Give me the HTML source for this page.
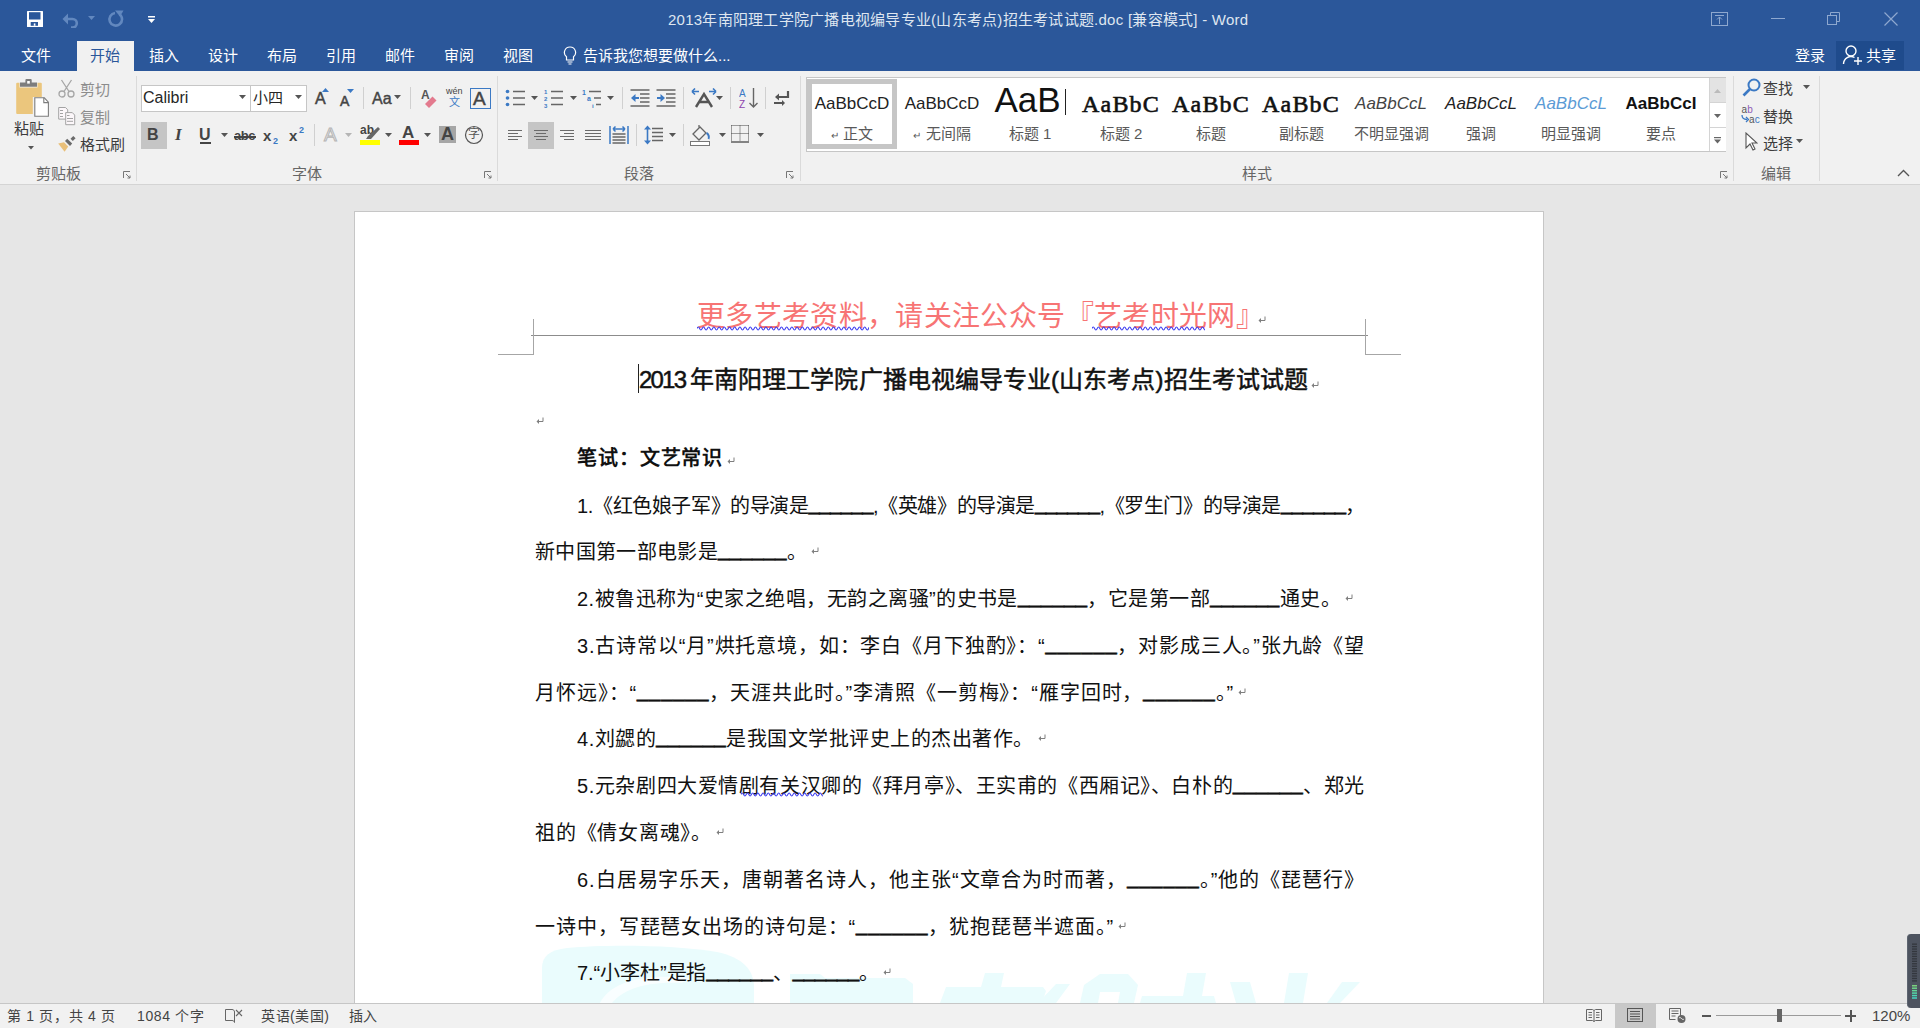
<!DOCTYPE html>
<html lang="zh-CN"><head><meta charset="utf-8">
<style>
*{box-sizing:border-box;margin:0;padding:0}
html,body{width:1920px;height:1028px;overflow:hidden;background:#e6e6e6;font-family:"Liberation Sans",sans-serif}
.a{position:absolute;white-space:nowrap}
#top{position:absolute;left:0;top:0;width:1920px;height:71px;background:#2b579a}
#ribbon{position:absolute;left:0;top:71px;width:1920px;height:114px;background:#f1f1f1;border-bottom:1px solid #d4d4d4}
#canvas{position:absolute;left:0;top:185px;width:1920px;height:818px;background:#e6e6e6}
#page{position:absolute;left:354px;top:211px;width:1190px;height:900px;background:#fff;border:1px solid #c6c6c6}
#status{position:absolute;left:0;top:1003px;width:1920px;height:25px;background:#f1f1f1;border-top:1px solid #c6c6c6}
.tab{position:absolute;top:46px;font-size:15px;color:#fff;line-height:20px}
.rt{font-size:14px;color:#3c3c3c;line-height:18px}
.gl{font-size:14px;color:#666;line-height:18px}
.sep{position:absolute;top:76px;width:1px;height:105px;background:#dadada}
.ln{font-size:20px;color:#111;line-height:26px}
.u{position:relative;top:-3px;-webkit-text-stroke:0.7px #111}
</style></head><body>
<div id="top"></div>
<div id="ribbon"></div>
<div id="canvas"></div>
<div id="page"></div>
<div id="status"></div>

<!-- TITLE BAR -->
<svg class="a" style="left:26px;top:10px" width="18" height="18" viewBox="0 0 18 18"><rect x="1" y="1" width="16" height="16" rx="0.5" fill="#fff"/><rect x="3" y="2.2" width="11.5" height="7.3" fill="#2b579a"/><rect x="4.7" y="12" width="7.3" height="3.8" fill="#2b579a"/><rect x="7.8" y="13.4" width="1.6" height="2.4" fill="#fff"/></svg>
<svg class="a" style="left:62px;top:11px" width="20" height="17" viewBox="0 0 20 17"><path d="M4 8h6.5a4.3 4.3 0 0 1 0 8.6H9" fill="none" stroke="#6288bf" stroke-width="2.6"/><path d="M0.5 8L6 2.5V13.5z" fill="#6288bf"/></svg>
<svg class="a" style="left:88px;top:16px" width="8" height="5"><path d="M0 0h7l-3.5 4z" fill="#6288bf"/></svg>
<svg class="a" style="left:107px;top:10px" width="18" height="18" viewBox="0 0 18 18"><path d="M12.5 4.2A6.3 6.3 0 1 1 8 3" fill="none" stroke="#6288bf" stroke-width="2.6"/><path d="M8 0.5h8.5l-3.5 6z" fill="#6288bf"/></svg>
<svg class="a" style="left:148px;top:16px" width="8" height="8"><rect x="0" y="0" width="7" height="1.5" fill="#fff"/><path d="M0 3h7l-3.5 4z" fill="#fff"/></svg>
<div class="a" style="left:668px;top:10px;font-size:15px;color:#dfe6f0;line-height:20px;letter-spacing:0.25px">2013年南阳理工学院广播电视编导专业(山东考点)招生考试试题.doc [兼容模式] - Word</div>
<svg class="a" style="left:1711px;top:12px" width="18" height="15"><rect x="0.5" y="0.5" width="16" height="13" fill="none" stroke="#8ea8cf"/><path d="M4 3.5h9M8.5 5v7M6 7.5l2.5-2.5 2.5 2.5" fill="none" stroke="#8ea8cf"/></svg>
<div class="a" style="left:1771px;top:18px;width:14px;height:1px;background:#8ea8cf"></div>
<svg class="a" style="left:1827px;top:12px" width="14" height="14"><rect x="0.5" y="3.5" width="9" height="9" fill="none" stroke="#8ea8cf"/><path d="M3.5 3.5v-3h9v9h-3" fill="none" stroke="#8ea8cf"/></svg>
<svg class="a" style="left:1884px;top:12px" width="14" height="14"><path d="M0.5 0.5l13 13M13.5 0.5l-13 13" stroke="#8ea8cf" stroke-width="1.2"/></svg>

<!-- TABS -->
<div class="a" style="left:77px;top:41px;width:57px;height:30px;background:#f1f1f1"></div>
<div class="tab a" style="left:21px">文件</div>
<div class="tab a" style="left:90px;color:#2b579a">开始</div>
<div class="tab a" style="left:149px">插入</div>
<div class="tab a" style="left:208px">设计</div>
<div class="tab a" style="left:267px">布局</div>
<div class="tab a" style="left:326px">引用</div>
<div class="tab a" style="left:385px">邮件</div>
<div class="tab a" style="left:444px">审阅</div>
<div class="tab a" style="left:503px">视图</div>
<svg class="a" style="left:563px;top:46px" width="14" height="20" viewBox="0 0 14 20"><path d="M7 1a5.5 5.5 0 0 0-3.5 9.8V14h7v-3.2A5.5 5.5 0 0 0 7 1z" fill="none" stroke="#fff" stroke-width="1.2"/><path d="M4.5 16h5M5.5 18h3" stroke="#fff" stroke-width="1.2"/></svg>
<div class="tab a" style="left:583px;color:#fff">告诉我您想要做什么...</div>
<div class="tab a" style="left:1795px">登录</div>
<div class="a" style="left:1836px;top:41px;width:68px;height:29px;background:#1f4b8c"></div>
<svg class="a" style="left:1842px;top:44px" width="22" height="22" viewBox="0 0 22 22"><circle cx="9" cy="7" r="5" fill="none" stroke="#fff" stroke-width="1.4"/><path d="M1.5 20a7.5 7.5 0 0 1 11-6.5" fill="none" stroke="#fff" stroke-width="1.4"/><path d="M16 13v8M12 17h8" stroke="#fff" stroke-width="1.4"/></svg>
<div class="tab a" style="left:1866px">共享</div>


<!-- RIBBON: CLIPBOARD -->
<svg class="a" style="left:13px;top:77px" width="38" height="42" viewBox="13 77 38 42"><path d="M16.2 82.8h3.3v4.6h18v-4.6h3.3a1 1 0 0 1 1 1v13.2h-9v17h-15.6a1 1 0 0 1-1-1v-29.2a1 1 0 0 1 1-1z" fill="#ebc67d"/><path d="M20 82.5h5.4v-2.6a1 1 0 0 1 1-1h4.3a1 1 0 0 1 1 1v2.6h5.3v4.3h-17z" fill="#7d7d7d"/><rect x="27.2" y="81" width="2.6" height="2.6" fill="#fff"/><path d="M34.8 97.8h9.5l4.1 4.4v14h-13.6z" fill="#fff" stroke="#7d7d7d" stroke-width="1.1"/><path d="M43.8 97.8v4.8h4.6" fill="none" stroke="#7d7d7d" stroke-width="1.1"/></svg>
<div class="a rt" style="left:14px;top:120px;font-size:15px">粘贴</div>
<svg class="a" style="left:28px;top:146px" width="7" height="4"><path d="M0 0h6l-3 3.5z" fill="#555"/></svg>
<svg class="a" style="left:58px;top:79px" width="17" height="19" viewBox="0 0 17 19"><path d="M3.5 1l7.5 11.5M13.5 1l-7.5 11.5" stroke="#a6a6a6" stroke-width="1.3"/><circle cx="4" cy="15" r="3" fill="none" stroke="#a6a6a6" stroke-width="1.3"/><circle cx="13" cy="15" r="3" fill="none" stroke="#a6a6a6" stroke-width="1.3"/></svg>
<div class="a rt" style="left:80px;top:81px;color:#8c8c8c;font-size:15px">剪切</div>
<svg class="a" style="left:57px;top:106px" width="20" height="20" viewBox="57 106 20 20"><path d="M58.7 107.5h6.8l2.2 2.3v9.3h-9z" fill="#fcf7fa" stroke="#a3a3a3" stroke-width="1"/><path d="M65.7 112.6h6.6l2.4 2.5v9.6h-9z" fill="#fcf7fa" stroke="#a3a3a3" stroke-width="1"/><path d="M60 110.5h3M60 113.5h3M60 116.5h3M67 115.5h2.5M67 118.5h6M67 121.3h6" stroke="#a3a3a3" stroke-width="1"/></svg>
<div class="a rt" style="left:80px;top:109px;color:#8c8c8c;font-size:15px">复制</div>
<svg class="a" style="left:57px;top:135px" width="20" height="18" viewBox="57 135 20 18"><path d="M58.2 143.5l5.8-1.2 4.2 4.3-3.6 5.2z" fill="#e9c07a"/><path d="M65 141l2.2-2.2 5 4.8-2.2 2.3z" fill="#6b6b6b"/><path d="M70.5 138.8l2.8-2.8 2.3 2.2-2.8 2.9z" fill="#6b6b6b"/></svg>
<div class="a rt" style="left:80px;top:136px;font-size:15px">格式刷</div>
<div class="a gl" style="left:36px;top:165px;font-size:15px">剪贴板</div>
<svg class="a" style="left:123px;top:171px" width="8" height="8"><path d="M0.5 7V0.5H7M3 3l4 4M4.5 7H7V4.5" fill="none" stroke="#777"/></svg>
<div class="sep" style="left:136px"></div>

<!-- FONT -->
<div class="a" style="left:141px;top:85px;width:166px;height:27px;background:#fff;border:1px solid #c6c6c6"></div>
<div class="a" style="left:250px;top:86px;width:1px;height:25px;background:#c6c6c6"></div>
<div class="a" style="left:143px;top:88px;font-size:16px;color:#262626;line-height:20px">Calibri</div>
<svg class="a" style="left:239px;top:95px" width="8" height="5"><path d="M0 0h7l-3.5 4z" fill="#555"/></svg>
<div class="a" style="left:253px;top:88px;font-size:15px;color:#262626;line-height:20px">小四</div>
<svg class="a" style="left:295px;top:95px" width="8" height="5"><path d="M0 0h7l-3.5 4z" fill="#555"/></svg>
<div class="a" style="left:315px;top:90px;font-size:16px;color:#444;line-height:18px;-webkit-text-stroke:0.5px #444">A</div>
<svg class="a" style="left:322px;top:88px" width="8" height="5"><path d="M0 4h7l-3.5-4z" fill="#3b79c4"/></svg>
<div class="a" style="left:340px;top:93px;font-size:14px;color:#444;line-height:16px;-webkit-text-stroke:0.5px #444">A</div>
<svg class="a" style="left:347px;top:89px" width="8" height="5"><path d="M0 0h7l-3.5 4z" fill="#3b79c4"/></svg>
<div class="a" style="left:363px;top:87px;width:1px;height:22px;background:#d0d0d0"></div>
<div class="a" style="left:372px;top:90px;font-size:16px;color:#444;line-height:18px;-webkit-text-stroke:0.4px #444">Aa</div>
<svg class="a" style="left:394px;top:95px" width="8" height="5"><path d="M0 0h7l-3.5 4z" fill="#555"/></svg>
<div class="a" style="left:410px;top:87px;width:1px;height:22px;background:#d0d0d0"></div>
<div class="a" style="left:421px;top:88px;font-size:12px;color:#555;line-height:14px;font-weight:bold">A</div>
<svg class="a" style="left:424px;top:94px" width="14" height="14" viewBox="0 0 14 14"><path d="M1 10l7.5-7.5 4 4L5 14z" fill="#e37a8e"/></svg>
<div class="a" style="left:446px;top:86px;font-size:9px;color:#444;line-height:11px">wén</div>
<div class="a" style="left:449px;top:96px;font-size:11px;color:#3b79c4;line-height:12px">文</div>
<div class="a" style="left:470px;top:88px;width:21px;height:21px;border:1.5px solid #3b79c4"></div>
<div class="a" style="left:473px;top:89px;font-size:19px;color:#444;line-height:19px;-webkit-text-stroke:0.5px #444">A</div>

<div class="a" style="left:141px;top:122px;width:26px;height:27px;background:#c5c5c5"></div>
<div class="a" style="left:147px;top:126px;font-size:16px;color:#444;line-height:18px;font-weight:bold">B</div>
<div class="a" style="left:175px;top:126px;font-size:17px;color:#444;line-height:18px;font-weight:bold;font-style:italic;font-family:'Liberation Serif',serif">I</div>
<div class="a" style="left:199px;top:126px;font-size:16px;color:#444;line-height:18px;font-weight:bold">U</div>
<div class="a" style="left:200px;top:142px;width:11px;height:1.5px;background:#444"></div>
<svg class="a" style="left:221px;top:133px" width="8" height="5"><path d="M0 0h7l-3.5 4z" fill="#555"/></svg>
<div class="a" style="left:234px;top:129px;font-size:13px;color:#444;line-height:14px;font-weight:bold;letter-spacing:-0.5px">abc</div>
<div class="a" style="left:234px;top:136px;width:22px;height:1.5px;background:#444"></div>
<div class="a" style="left:263px;top:128px;font-size:15px;color:#444;line-height:16px;font-weight:bold">x</div>
<div class="a" style="left:273px;top:136px;font-size:9px;color:#3b79c4;line-height:10px;font-weight:bold">2</div>
<div class="a" style="left:289px;top:128px;font-size:15px;color:#444;line-height:16px;font-weight:bold">x</div>
<div class="a" style="left:299px;top:125px;font-size:9px;color:#3b79c4;line-height:10px;font-weight:bold">2</div>
<div class="a" style="left:314px;top:124px;width:1px;height:22px;background:#d0d0d0"></div>
<div class="a" style="left:324px;top:125px;font-size:19px;color:#f1f1f1;line-height:19px;-webkit-text-stroke:1px #b5b5b5">A</div>
<svg class="a" style="left:345px;top:133px" width="8" height="5"><path d="M0 0h7l-3.5 4z" fill="#b5b5b5"/></svg>
<div class="a" style="left:360px;top:123px;font-size:12px;color:#444;line-height:14px;font-weight:bold">ab</div>
<svg class="a" style="left:365px;top:126px" width="16" height="14"><path d="M1 13l2-3 10-9 2 2-9 10z" fill="#666"/></svg>
<div class="a" style="left:360px;top:140px;width:20px;height:5px;background:#ffff00"></div>
<svg class="a" style="left:385px;top:133px" width="8" height="5"><path d="M0 0h7l-3.5 4z" fill="#555"/></svg>
<div class="a" style="left:402px;top:124px;font-size:17px;color:#444;line-height:17px;font-weight:bold">A</div>
<div class="a" style="left:399px;top:140px;width:20px;height:5px;background:#ff0000"></div>
<svg class="a" style="left:424px;top:133px" width="8" height="5"><path d="M0 0h7l-3.5 4z" fill="#555"/></svg>
<div class="a" style="left:439px;top:126px;width:17px;height:17px;background:#a6a6a6"></div>
<div class="a" style="left:441px;top:125px;font-size:18px;color:#444;line-height:18px;font-weight:bold">A</div>
<svg class="a" style="left:464px;top:125px" width="20" height="20"><circle cx="10" cy="10" r="8.5" fill="none" stroke="#555" stroke-width="1.2"/></svg>
<div class="a" style="left:468px;top:127px;font-size:12px;color:#555;line-height:14px">字</div>
<div class="a gl" style="left:292px;top:165px;font-size:15px">字体</div>
<svg class="a" style="left:484px;top:171px" width="8" height="8"><path d="M0.5 7V0.5H7M3 3l4 4M4.5 7H7V4.5" fill="none" stroke="#777"/></svg>
<div class="sep" style="left:497px"></div>


<!-- PARAGRAPH -->
<svg class="a" style="left:505px;top:89px" width="22" height="18" viewBox="0 0 22 18"><circle cx="2.5" cy="2.5" r="1.8" fill="#3b79c4"/><circle cx="2.5" cy="9" r="1.8" fill="#3b79c4"/><circle cx="2.5" cy="15.5" r="1.8" fill="#3b79c4"/><path d="M8 2.5h12M8 9h12M8 15.5h12" stroke="#666" stroke-width="1.5"/></svg><svg class="a" style="left:531px;top:96px" width="8" height="5"><path d="M0 0h7l-3.5 4z" fill="#555"/></svg><svg class="a" style="left:544px;top:88px" width="22" height="20" viewBox="0 0 22 20"><text x="0" y="6" font-size="6" fill="#3b79c4" font-family="Liberation Sans" font-weight="bold">1</text><text x="0" y="13" font-size="6" fill="#3b79c4" font-family="Liberation Sans" font-weight="bold">2</text><text x="0" y="20" font-size="6" fill="#3b79c4" font-family="Liberation Sans" font-weight="bold">3</text><path d="M7 3.5h12M7 10h12M7 16.5h12" stroke="#666" stroke-width="1.5"/></svg><svg class="a" style="left:570px;top:96px" width="8" height="5"><path d="M0 0h7l-3.5 4z" fill="#555"/></svg><svg class="a" style="left:582px;top:88px" width="24" height="20" viewBox="0 0 24 20"><text x="0" y="7" font-size="7" fill="#3b79c4" font-family="Liberation Sans" font-weight="bold">1</text><text x="5" y="13" font-size="7" fill="#3b79c4" font-family="Liberation Sans" font-weight="bold">a</text><text x="10" y="20" font-size="6" fill="#3b79c4" font-family="Liberation Sans" font-weight="bold">i</text><path d="M7 3.5h12M12 10h7M14 16.5h5" stroke="#666" stroke-width="1.5"/></svg><svg class="a" style="left:607px;top:96px" width="8" height="5"><path d="M0 0h7l-3.5 4z" fill="#555"/></svg><div class="a" style="left:622px;top:87px;width:1px;height:22px;background:#d0d0d0"></div><svg class="a" style="left:630px;top:89px" width="20" height="18" viewBox="0 0 20 18"><path d="M0.5 1h19M10 5h9.5M10 9h9.5M10 13h9.5M0.5 17h19" stroke="#666" stroke-width="1.4"/><path d="M1 9l4.5-4v8z" fill="#3b79c4"/><path d="M5 9h4" stroke="#3b79c4" stroke-width="2"/></svg><svg class="a" style="left:656px;top:89px" width="20" height="18" viewBox="0 0 20 18"><path d="M0.5 1h19M10 5h9.5M10 9h9.5M10 13h9.5M0.5 17h19" stroke="#666" stroke-width="1.4"/><path d="M9 9l-4.5-4v8z" fill="#3b79c4"/><path d="M1 9h4" stroke="#3b79c4" stroke-width="2"/></svg><div class="a" style="left:683px;top:87px;width:1px;height:22px;background:#d0d0d0"></div><svg class="a" style="left:691px;top:88px" width="26" height="20" viewBox="0 0 26 20"><path d="M1 3.5h7M18 3.5h7" stroke="#3b79c4" stroke-width="1.6"/><path d="M1 3.5l3-3M1 3.5l3 3M25 3.5l-3-3M25 3.5l-3 3" stroke="#3b79c4" stroke-width="1.6" fill="none"/><path d="M5 19l8-13 8 13M8.5 14h9" stroke="#555" stroke-width="2.4" fill="none"/></svg><svg class="a" style="left:716px;top:96px" width="8" height="5"><path d="M0 0h7l-3.5 4z" fill="#555"/></svg><div class="a" style="left:730px;top:87px;width:1px;height:22px;background:#d0d0d0"></div><svg class="a" style="left:739px;top:87px" width="20" height="22" viewBox="0 0 20 22"><text x="0" y="10" font-size="10" fill="#3b79c4" font-family="Liberation Sans">A</text><text x="0" y="21" font-size="10" fill="#8e44ad" font-family="Liberation Sans">Z</text><path d="M14.5 1v19M10.5 16l4 4 4-4" stroke="#666" stroke-width="1.4" fill="none"/></svg><div class="a" style="left:765px;top:87px;width:1px;height:22px;background:#d0d0d0"></div><svg class="a" style="left:773px;top:90px" width="18" height="16" viewBox="0 0 18 16"><path d="M15 1v6h-9" stroke="#555" stroke-width="2.2" fill="none"/><path d="M6 3.5v7l-4-3.5z" fill="#555"/><path d="M1 13h8" stroke="#555" stroke-width="2"/><path d="M9 10l3 3-3 3z" fill="#555"/></svg><div class="a" style="left:508px;top:130px;width:14px;height:1.2px;background:#6a6a6a"></div><div class="a" style="left:508px;top:133px;width:10px;height:1.2px;background:#6a6a6a"></div><div class="a" style="left:508px;top:136px;width:14px;height:1.2px;background:#6a6a6a"></div><div class="a" style="left:508px;top:139px;width:10px;height:1.2px;background:#6a6a6a"></div><div class="a" style="left:528px;top:122px;width:26px;height:27px;background:#c5c5c5"></div><div class="a" style="left:534px;top:130px;width:14px;height:1.2px;background:#6a6a6a"></div><div class="a" style="left:536px;top:133px;width:10px;height:1.2px;background:#6a6a6a"></div><div class="a" style="left:534px;top:136px;width:14px;height:1.2px;background:#6a6a6a"></div><div class="a" style="left:536px;top:139px;width:10px;height:1.2px;background:#6a6a6a"></div><div class="a" style="left:560px;top:130px;width:14px;height:1.2px;background:#6a6a6a"></div><div class="a" style="left:564px;top:133px;width:10px;height:1.2px;background:#6a6a6a"></div><div class="a" style="left:560px;top:136px;width:14px;height:1.2px;background:#6a6a6a"></div><div class="a" style="left:564px;top:139px;width:10px;height:1.2px;background:#6a6a6a"></div><div class="a" style="left:585px;top:130px;width:16px;height:1.2px;background:#6a6a6a"></div><div class="a" style="left:585px;top:133px;width:16px;height:1.2px;background:#6a6a6a"></div><div class="a" style="left:585px;top:136px;width:16px;height:1.2px;background:#6a6a6a"></div><div class="a" style="left:585px;top:139px;width:16px;height:1.2px;background:#6a6a6a"></div><svg class="a" style="left:609px;top:125px" width="20" height="20" viewBox="0 0 20 20"><path d="M1 1v18M19 1v18" stroke="#3b79c4" stroke-width="1.5"/><path d="M4 4h12M4 4l2.5-2.5M4 4l2.5 2.5M16 4l-2.5-2.5M16 4l-2.5 2.5" stroke="#3b79c4" stroke-width="1.5" fill="none"/><path d="M3.5 9h13M3.5 12h13M3.5 15h13M3.5 18h13" stroke="#666" stroke-width="1.5"/></svg><div class="a" style="left:636px;top:124px;width:1px;height:22px;background:#d0d0d0"></div><svg class="a" style="left:644px;top:125px" width="20" height="20" viewBox="0 0 20 20"><path d="M3.5 2v16" stroke="#3b79c4" stroke-width="1.6"/><path d="M0 4.5l3.5-4 3.5 4zM0 15.5l3.5 4 3.5-4z" fill="#3b79c4"/><path d="M8 3.5h11M8 7.5h11M8 11.5h11M8 15.5h11" stroke="#666" stroke-width="1.5"/></svg><svg class="a" style="left:669px;top:133px" width="8" height="5"><path d="M0 0h7l-3.5 4z" fill="#555"/></svg><div class="a" style="left:683px;top:124px;width:1px;height:22px;background:#d0d0d0"></div><svg class="a" style="left:690px;top:124px" width="24" height="22" viewBox="0 0 24 22"><path d="M3 10l7-7 6 6-7 7z" fill="none" stroke="#666" stroke-width="1.3"/><path d="M9 3.5v-2.5" stroke="#666" stroke-width="1.3"/><path d="M16.5 9c2 1 3 4 2 6" stroke="#3b79c4" stroke-width="2" fill="none"/><rect x="0.5" y="17.5" width="19" height="4" fill="#fff" stroke="#777"/></svg><svg class="a" style="left:719px;top:133px" width="8" height="5"><path d="M0 0h7l-3.5 4z" fill="#555"/></svg><svg class="a" style="left:731px;top:125px" width="18" height="18" viewBox="0 0 18 18"><path d="M0.5 0.5h17M0.5 0.5v16M17.5 0.5v16M9 0.5v16M0.5 8.5h17" stroke="#444" stroke-width="1" stroke-dasharray="1 1" fill="none"/><path d="M0 17h18" stroke="#555" stroke-width="1.4"/></svg><svg class="a" style="left:757px;top:133px" width="8" height="5"><path d="M0 0h7l-3.5 4z" fill="#555"/></svg><div class="a gl" style="left:624px;top:165px;font-size:15px">段落</div><svg class="a" style="left:786px;top:171px" width="8" height="8"><path d="M0.5 7V0.5H7M3 3l4 4M4.5 7H7V4.5" fill="none" stroke="#777"/></svg><div class="sep" style="left:800px"></div>
<!-- STYLES -->
<div class="a" style="left:806px;top:77px;width:920px;height:75px;background:#fff;border:1px solid #c6c6c6"></div><div class="a" style="left:807px;top:79px;width:90px;height:70px;border:5px solid #c6c6c6"></div><div class="a" style="left:807px;top:89px;width:90px;height:30px;overflow:hidden;text-align:center;line-height:30px;font-size:17px;color:#222;">AaBbCcD</div><div class="a" style="left:807px;top:125px;width:90px;text-align:center;font-size:15px;color:#595959;line-height:18px"><span style="font-size:10px">↵</span> 正文</div><div class="a" style="left:897px;top:89px;width:90px;height:30px;overflow:hidden;text-align:center;line-height:30px;font-size:17px;color:#222;">AaBbCcD</div><div class="a" style="left:897px;top:125px;width:90px;text-align:center;font-size:15px;color:#595959;line-height:18px"><span style="font-size:10px">↵</span> 无间隔</div><div class="a" style="left:985px;top:85px;width:90px;height:30px;overflow:hidden;text-align:center;line-height:30px;font-size:35px;color:#111;">AaB<span style="display:inline-block;width:1px;height:26px;background:#222;margin-left:4px;vertical-align:-3px"></span></div><div class="a" style="left:985px;top:125px;width:90px;text-align:center;font-size:15px;color:#595959;line-height:18px">标题 1</div><div class="a" style="left:1076px;top:89px;width:90px;height:30px;overflow:hidden;text-align:center;line-height:30px;font-size:24px;color:#111;font-family:'Liberation Serif',serif;-webkit-text-stroke:0.6px #111;letter-spacing:1.2px">AaBbC</div><div class="a" style="left:1076px;top:125px;width:90px;text-align:center;font-size:15px;color:#595959;line-height:18px">标题 2</div><div class="a" style="left:1166px;top:89px;width:90px;height:30px;overflow:hidden;text-align:center;line-height:30px;font-size:24px;color:#111;font-family:'Liberation Serif',serif;-webkit-text-stroke:0.6px #111;letter-spacing:1.2px">AaBbC</div><div class="a" style="left:1166px;top:125px;width:90px;text-align:center;font-size:15px;color:#595959;line-height:18px">标题</div><div class="a" style="left:1256px;top:89px;width:90px;height:30px;overflow:hidden;text-align:center;line-height:30px;font-size:24px;color:#111;font-family:'Liberation Serif',serif;-webkit-text-stroke:0.6px #111;letter-spacing:1.2px">AaBbC</div><div class="a" style="left:1256px;top:125px;width:90px;text-align:center;font-size:15px;color:#595959;line-height:18px">副标题</div><div class="a" style="left:1346px;top:89px;width:90px;height:30px;overflow:hidden;text-align:center;line-height:30px;font-size:17px;color:#444;font-style:italic;">AaBbCcL</div><div class="a" style="left:1346px;top:125px;width:90px;text-align:center;font-size:15px;color:#595959;line-height:18px">不明显强调</div><div class="a" style="left:1436px;top:89px;width:90px;height:30px;overflow:hidden;text-align:center;line-height:30px;font-size:17px;color:#222;font-style:italic;">AaBbCcL</div><div class="a" style="left:1436px;top:125px;width:90px;text-align:center;font-size:15px;color:#595959;line-height:18px">强调</div><div class="a" style="left:1526px;top:89px;width:90px;height:30px;overflow:hidden;text-align:center;line-height:30px;font-size:17px;color:#5b9bd5;font-style:italic;">AaBbCcL</div><div class="a" style="left:1526px;top:125px;width:90px;text-align:center;font-size:15px;color:#595959;line-height:18px">明显强调</div><div class="a" style="left:1616px;top:89px;width:90px;height:30px;overflow:hidden;text-align:center;line-height:30px;font-size:17px;color:#111;font-weight:bold;">AaBbCcI</div><div class="a" style="left:1616px;top:125px;width:90px;text-align:center;font-size:15px;color:#595959;line-height:18px">要点</div><div class="a" style="left:1709px;top:78px;width:17px;height:73px;background:#fff;border-left:1px solid #d4d4d4"></div><div class="a" style="left:1710px;top:78px;width:16px;height:25px;background:#e3e3e3;border-bottom:1px solid #d4d4d4"></div><div class="a" style="left:1710px;top:127px;width:16px;height:1px;background:#d4d4d4"></div><svg class="a" style="left:1714px;top:89px" width="8" height="5"><path d="M0 4h7l-3.5-4z" fill="#bbb"/></svg><svg class="a" style="left:1714px;top:114px" width="8" height="5"><path d="M0 0h7l-3.5 4z" fill="#666"/></svg><svg class="a" style="left:1714px;top:137px" width="8" height="7"><rect width="7" height="1.2" fill="#666"/><path d="M0 2.5h7l-3.5 4z" fill="#666"/></svg><div class="a gl" style="left:1242px;top:165px;font-size:15px">样式</div><svg class="a" style="left:1720px;top:171px" width="8" height="8"><path d="M0.5 7V0.5H7M3 3l4 4M4.5 7H7V4.5" fill="none" stroke="#777"/></svg><div class="sep" style="left:1733px"></div>
<!-- EDITING -->
<svg class="a" style="left:1742px;top:78px" width="19" height="19" viewBox="0 0 19 19"><circle cx="12" cy="7" r="5.5" fill="none" stroke="#3b79c4" stroke-width="2"/><path d="M8 11L1.5 17.5" stroke="#3b79c4" stroke-width="2.6"/></svg><div class="a rt" style="left:1763px;top:80px;font-size:15px">查找</div><svg class="a" style="left:1803px;top:85px" width="8" height="5"><path d="M0 0h7l-3.5 4z" fill="#555"/></svg><svg class="a" style="left:1741px;top:104px" width="21" height="21" viewBox="0 0 21 21"><text x="0.5" y="8.5" font-size="10" fill="#555" font-family="Liberation Sans">a</text><text x="6.2" y="8.5" font-size="10" fill="#8e5bb5" font-family="Liberation Sans">b</text><text x="8" y="18.5" font-size="10" fill="#555" font-family="Liberation Sans">a</text><text x="13.7" y="18.5" font-size="10" fill="#3b79c4" font-family="Liberation Sans">c</text><path d="M1 11c0 3 1.5 4.5 5 4.5" stroke="#3b79c4" stroke-width="1.3" fill="none"/><path d="M5 13l2.5 2.5-2.5 2.5" stroke="#3b79c4" stroke-width="1.3" fill="none"/></svg><div class="a rt" style="left:1763px;top:108px;font-size:15px">替换</div><svg class="a" style="left:1745px;top:132px" width="13" height="19" viewBox="0 0 13 19"><path d="M1 1v15l4-4 3 6 2-1-3-6h5z" fill="#fff" stroke="#555" stroke-width="1.1"/></svg><div class="a rt" style="left:1763px;top:135px;font-size:15px">选择</div><svg class="a" style="left:1796px;top:139px" width="8" height="5"><path d="M0 0h7l-3.5 4z" fill="#555"/></svg><div class="a gl" style="left:1761px;top:165px;font-size:15px">编辑</div><div class="sep" style="left:1819px"></div><svg class="a" style="left:1897px;top:169px" width="13" height="8"><path d="M1 7l5.5-5.5L12 7" fill="none" stroke="#555" stroke-width="1.4"/></svg>

<!-- DOCUMENT -->
<svg class="a" style="left:535px;top:945px" width="830" height="58" viewBox="535 945 830 58"><g fill="#eafcfd">
<path d="M542 1003V968c0-12 8-18 25-20 40-4 110-3 150 4 25 5 37 18 37 35v16z"/>
<path d="M790 1003v-29h30l5 4h80l8 6v19z"/>
<path d="M940 1003l6-16h35l4-14h19l-3 14h42l3 4-4 12z"/>
<path d="M1038 1003l18-19h14l-14 19z"/>
<path d="M1080 1003l4-18 16-11h28l10 11-4 18h-16l2-11h-20l-2 11z"/>
<path d="M1140 1003l2-7h41l4-23h19l-4 23h12l2 7z"/>
<path d="M1236 1003l-6-21h20l6 21z"/>
<path d="M1284 1003l5-30h19l-5 30z"/>
<path d="M1327 1003l15-21h18l-20 21z"/>
</g><g fill="#ffffff" opacity="0.7"><path d="M600 1003c10-20 40-30 90-25l-8 5c-40-2-60 8-70 20z"/></g></svg><div class="a" style="left:697px;top:301px;font-size:28px;line-height:32px;color:#f77474;letter-spacing:0.35px">更多艺考资料，请关注公众号『艺考时光网』</div><svg class="a" style="left:1258px;top:316px" width="8" height="8" viewBox="0 0 8 8"><path d="M7 0.5v4H1.5" fill="none" stroke="#7f7f7f" stroke-width="1"/><path d="M0.5 4.5L3 2v5z" fill="#7f7f7f"/></svg><svg class="a" style="left:697px;top:325px" width="172" height="6"><path d="M0 3.5 q1.3 -3 2.6 0 t2.6 0 t2.6 0 t2.6 0 t2.6 0 t2.6 0 t2.6 0 t2.6 0 t2.6 0 t2.6 0 t2.6 0 t2.6 0 t2.6 0 t2.6 0 t2.6 0 t2.6 0 t2.6 0 t2.6 0 t2.6 0 t2.6 0 t2.6 0 t2.6 0 t2.6 0 t2.6 0 t2.6 0 t2.6 0 t2.6 0 t2.6 0 t2.6 0 t2.6 0 t2.6 0 t2.6 0 t2.6 0 t2.6 0 t2.6 0 t2.6 0 t2.6 0 t2.6 0 t2.6 0 t2.6 0 t2.6 0 t2.6 0 t2.6 0 t2.6 0 t2.6 0 t2.6 0 t2.6 0 t2.6 0 t2.6 0 t2.6 0 t2.6 0 t2.6 0 t2.6 0 t2.6 0 t2.6 0 t2.6 0 t2.6 0 t2.6 0 t2.6 0 t2.6 0 t2.6 0 t2.6 0 t2.6 0 t2.6 0 t2.6 0 t2.6 0 t2.6 0 t2.6 0" fill="none" stroke="#3c3cf0" stroke-width="1.1"/></svg><svg class="a" style="left:1092px;top:325px" width="113" height="6"><path d="M0 3.5 q1.3 -3 2.6 0 t2.6 0 t2.6 0 t2.6 0 t2.6 0 t2.6 0 t2.6 0 t2.6 0 t2.6 0 t2.6 0 t2.6 0 t2.6 0 t2.6 0 t2.6 0 t2.6 0 t2.6 0 t2.6 0 t2.6 0 t2.6 0 t2.6 0 t2.6 0 t2.6 0 t2.6 0 t2.6 0 t2.6 0 t2.6 0 t2.6 0 t2.6 0 t2.6 0 t2.6 0 t2.6 0 t2.6 0 t2.6 0 t2.6 0 t2.6 0 t2.6 0 t2.6 0 t2.6 0 t2.6 0 t2.6 0 t2.6 0 t2.6 0 t2.6 0 t2.6 0 t2.6 0" fill="none" stroke="#3c3cf0" stroke-width="1.1"/></svg><div class="a" style="left:531px;top:335px;width:837px;height:1px;background:#8c8c8c"></div><div class="a" style="left:533px;top:319px;width:1px;height:36px;background:#a6a6a6"></div><div class="a" style="left:498px;top:354px;width:36px;height:1px;background:#a6a6a6"></div><div class="a" style="left:1365px;top:319px;width:1px;height:36px;background:#a6a6a6"></div><div class="a" style="left:1365px;top:354px;width:36px;height:1px;background:#a6a6a6"></div><div class="a" style="left:638px;top:364px;width:1px;height:29px;background:#222"></div><div class="a" style="left:639px;top:366px;font-size:24px;line-height:28px;color:#111;font-weight:normal;-webkit-text-stroke:0.5px #111;letter-spacing:0.07px"><span style="letter-spacing:-1.8px">2013 </span>年南阳理工学院广播电视编导专业(山东考点)招生考试试题</div><svg class="a" style="left:1311px;top:381px" width="8" height="8" viewBox="0 0 8 8"><path d="M7 0.5v4H1.5" fill="none" stroke="#7f7f7f" stroke-width="1"/><path d="M0.5 4.5L3 2v5z" fill="#7f7f7f"/></svg><svg class="a" style="left:536px;top:417px" width="8" height="8" viewBox="0 0 8 8"><path d="M7 0.5v4H1.5" fill="none" stroke="#7f7f7f" stroke-width="1"/><path d="M0.5 4.5L3 2v5z" fill="#7f7f7f"/></svg><div class="a" style="left:577px;top:445px;font-size:20px;line-height:26px;color:#111;font-weight:bold;letter-spacing:0.9px">笔试：文艺常识</div><svg class="a" style="left:727px;top:457px" width="8" height="8" viewBox="0 0 8 8"><path d="M7 0.5v4H1.5" fill="none" stroke="#7f7f7f" stroke-width="1"/><path d="M0.5 4.5L3 2v5z" fill="#7f7f7f"/></svg><div class="a ln" style="left:577px;top:493px;width:788px;letter-spacing:-0.393px">1.《红色娘子军》的导演是<span class="u">______</span>,《英雄》的导演是<span class="u">______</span>,《罗生门》的导演是<span class="u">______</span>，</div><div class="a ln" style="left:535px;top:539px;width:272px;letter-spacing:0.328px">新中国第一部电影是<span class="u">______</span>。</div><svg class="a" style="left:811px;top:547px" width="8" height="8" viewBox="0 0 8 8"><path d="M7 0.5v4H1.5" fill="none" stroke="#7f7f7f" stroke-width="1"/><path d="M0.5 4.5L3 2v5z" fill="#7f7f7f"/></svg><div class="a ln" style="left:577px;top:586px;width:764px;letter-spacing:0.456px">2.被鲁迅称为“史家之绝唱，无韵之离骚”的史书是<span class="u">______</span>，它是第一部<span class="u">______</span>通史。</div><svg class="a" style="left:1345px;top:594px" width="8" height="8" viewBox="0 0 8 8"><path d="M7 0.5v4H1.5" fill="none" stroke="#7f7f7f" stroke-width="1"/><path d="M0.5 4.5L3 2v5z" fill="#7f7f7f"/></svg><div class="a ln" style="left:577px;top:633px;width:788px;letter-spacing:0.842px">3.古诗常以“月”烘托意境，如：李白《月下独酌》：“<span class="u">______</span>，对影成三人。”张九龄《望</div><div class="a ln" style="left:535px;top:680px;width:699px;letter-spacing:0.903px">月怀远》：“<span class="u">______</span>，天涯共此时。”李清照《一剪梅》：“雁字回时，<span class="u">______</span>。”</div><svg class="a" style="left:1238px;top:688px" width="8" height="8" viewBox="0 0 8 8"><path d="M7 0.5v4H1.5" fill="none" stroke="#7f7f7f" stroke-width="1"/><path d="M0.5 4.5L3 2v5z" fill="#7f7f7f"/></svg><div class="a ln" style="left:577px;top:726px;width:457px;letter-spacing:0.522px">4.刘勰的<span class="u">______</span>是我国文学批评史上的杰出著作。</div><svg class="a" style="left:1038px;top:734px" width="8" height="8" viewBox="0 0 8 8"><path d="M7 0.5v4H1.5" fill="none" stroke="#7f7f7f" stroke-width="1"/><path d="M0.5 4.5L3 2v5z" fill="#7f7f7f"/></svg><div class="a ln" style="left:577px;top:773px;width:788px;letter-spacing:0.571px">5.元杂剧四大爱情剧有关汉卿的《拜月亭》、王实甫的《西厢记》、白朴的<span class="u">______</span>、郑光</div><div class="a ln" style="left:535px;top:820px;width:177px;letter-spacing:0.778px">祖的《倩女离魂》。</div><svg class="a" style="left:716px;top:828px" width="8" height="8" viewBox="0 0 8 8"><path d="M7 0.5v4H1.5" fill="none" stroke="#7f7f7f" stroke-width="1"/><path d="M0.5 4.5L3 2v5z" fill="#7f7f7f"/></svg><div class="a ln" style="left:577px;top:867px;width:788px;letter-spacing:0.959px">6.白居易字乐天，唐朝著名诗人，他主张“文章合为时而著，<span class="u">______</span>。”他的《琵琶行》</div><div class="a ln" style="left:535px;top:914px;width:579px;letter-spacing:0.903px">一诗中，写琵琶女出场的诗句是：“<span class="u">______</span>，犹抱琵琶半遮面。”</div><svg class="a" style="left:1118px;top:922px" width="8" height="8" viewBox="0 0 8 8"><path d="M7 0.5v4H1.5" fill="none" stroke="#7f7f7f" stroke-width="1"/><path d="M0.5 4.5L3 2v5z" fill="#7f7f7f"/></svg><div class="a ln" style="left:577px;top:960px;width:302px;letter-spacing:-0.065px">7.“小李杜”是指<span class="u">______</span>、<span class="u">______</span>。</div><svg class="a" style="left:883px;top:968px" width="8" height="8" viewBox="0 0 8 8"><path d="M7 0.5v4H1.5" fill="none" stroke="#7f7f7f" stroke-width="1"/><path d="M0.5 4.5L3 2v5z" fill="#7f7f7f"/></svg>
<svg class="a" style="left:741px;top:791px" width="82" height="6"><path d="M0 3.5 q1.3 -3 2.6 0 t2.6 0 t2.6 0 t2.6 0 t2.6 0 t2.6 0 t2.6 0 t2.6 0 t2.6 0 t2.6 0 t2.6 0 t2.6 0 t2.6 0 t2.6 0 t2.6 0 t2.6 0 t2.6 0 t2.6 0 t2.6 0 t2.6 0 t2.6 0 t2.6 0 t2.6 0 t2.6 0 t2.6 0 t2.6 0 t2.6 0 t2.6 0 t2.6 0 t2.6 0 t2.6 0 t2.6 0 t2.6 0" fill="none" stroke="#3c3cf0" stroke-width="1.1"/></svg>
<!-- STATUS BAR -->
<div class="a" style="left:7px;top:1006px;font-size:14px;color:#444;line-height:20px;letter-spacing:0.7px">第 1 页，共 4 页</div>
<div class="a" style="left:137px;top:1006px;font-size:14px;color:#444;line-height:20px;letter-spacing:0.6px">1084 个字</div>
<svg class="a" style="left:225px;top:1008px" width="19" height="15" viewBox="0 0 19 15"><path d="M0.5 1.5h6.5c1.5 0 2.5 1 2.5 2.5v10.5c0-1-1-2-2.5-2h-6.5z" fill="none" stroke="#666"/><path d="M11 2l6 6M17 2l-6 6" stroke="#666" stroke-width="1.1"/></svg>
<div class="a" style="left:261px;top:1006px;font-size:14px;color:#444;line-height:20px;letter-spacing:0.5px">英语(美国)</div>
<div class="a" style="left:349px;top:1006px;font-size:14px;color:#444;line-height:20px">插入</div>
<svg class="a" style="left:1586px;top:1008px" width="16" height="15" viewBox="0 0 16 15"><path d="M0.5 1.5h6l1.5 1 1.5-1h6v11h-6l-1.5 1-1.5-1h-6z" fill="none" stroke="#666"/><path d="M8 2.5v11M2.5 4.5h3.5M2.5 7h3.5M2.5 9.5h3.5M10 4.5h3.5M10 7h3.5M10 9.5h3.5" stroke="#666"/></svg>
<div class="a" style="left:1615px;top:1004px;width:41px;height:24px;background:#c8c8c8"></div>
<svg class="a" style="left:1627px;top:1008px" width="16" height="15" viewBox="0 0 16 15"><rect x="0.5" y="0.5" width="15" height="13" fill="none" stroke="#555"/><path d="M3 3.5h10M3 6h10M3 8.5h10M3 11h10" stroke="#555"/></svg>
<svg class="a" style="left:1669px;top:1008px" width="18" height="16" viewBox="0 0 18 16"><path d="M0.5 0.5h11v8M0.5 0.5v11h6" fill="none" stroke="#666"/><path d="M2.5 3h7M2.5 5.5h7M2.5 8h4" stroke="#666"/><circle cx="12.5" cy="11" r="4" fill="#666"/><path d="M10 10c1-1 2 0 3 1s2 0 2 0" stroke="#f1f1f1" fill="none"/></svg>
<div class="a" style="left:1702px;top:1015px;width:9px;height:2px;background:#555"></div>
<div class="a" style="left:1716px;top:1015px;width:125px;height:1px;background:#9a9a9a"></div>
<div class="a" style="left:1777px;top:1009px;width:5px;height:13px;background:#666"></div>
<div class="a" style="left:1845px;top:1015px;width:11px;height:2px;background:#555"></div>
<div class="a" style="left:1849.5px;top:1010px;width:2px;height:12px;background:#555"></div>
<div class="a" style="left:1872px;top:1006px;font-size:15px;color:#444;line-height:20px">120%</div>
<!-- floating widget -->
<div class="a" style="left:1907px;top:934px;width:13px;height:74px;background:#4d535f;border-radius:4px 0 0 4px;border-left:1px solid #5d6470"></div><svg class="a" style="left:1912px;top:942px" width="6" height="60"><rect x="0" y="1.50" width="5" height="1.3" fill="#33373e"/><rect x="0" y="3.95" width="5" height="1.3" fill="#33373e"/><rect x="0" y="6.40" width="5" height="1.3" fill="#33373e"/><rect x="0" y="8.85" width="5" height="1.3" fill="#33373e"/><rect x="0" y="11.30" width="5" height="1.3" fill="#33373e"/><rect x="0" y="13.75" width="5" height="1.3" fill="#33373e"/><rect x="0" y="16.20" width="5" height="1.3" fill="#33373e"/><rect x="0" y="18.65" width="5" height="1.3" fill="#33373e"/><rect x="0" y="21.10" width="5" height="1.3" fill="#33373e"/><rect x="0" y="23.55" width="5" height="1.3" fill="#33373e"/><rect x="0" y="26.00" width="5" height="1.3" fill="#33373e"/><rect x="0" y="28.45" width="5" height="1.3" fill="#33373e"/><rect x="0" y="30.90" width="5" height="1.3" fill="#33373e"/><rect x="0" y="33.35" width="5" height="1.3" fill="#33373e"/><rect x="0" y="35.80" width="5" height="1.3" fill="#33373e"/><rect x="0" y="38.25" width="5" height="1.3" fill="#33373e"/><rect x="0" y="43.00" width="5" height="1.5" fill="#7ad27e"/><rect x="0" y="45.45" width="5" height="1.5" fill="#6fd48a"/><rect x="0" y="47.90" width="5" height="1.5" fill="#62d597"/><rect x="0" y="50.35" width="5" height="1.5" fill="#55d6a6"/><rect x="0" y="52.80" width="5" height="1.5" fill="#4bd6b4"/><rect x="0" y="55.25" width="5" height="1.5" fill="#45d5c2"/></svg>

</body></html>
